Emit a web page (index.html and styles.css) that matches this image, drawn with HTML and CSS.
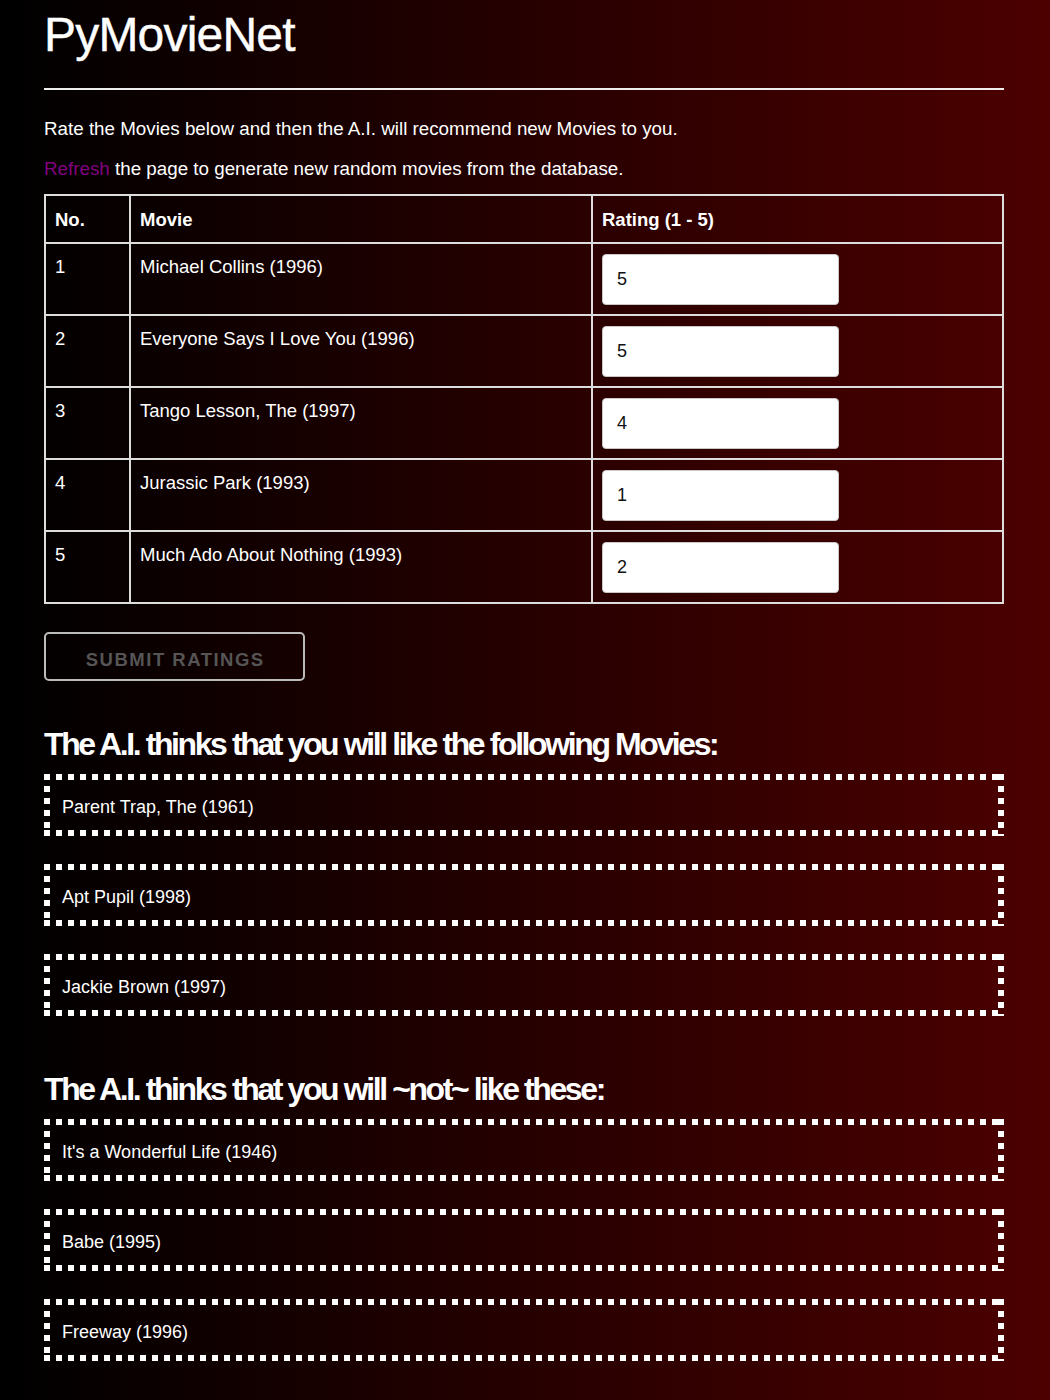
FILE: index.html
```html
<!DOCTYPE html>
<html lang="en">
<head>
<meta charset="utf-8">
<title>PyMovieNet</title>
<link rel="stylesheet" href="styles.css">
</head>
<body>
<div class="container">
  <h1 class="title">PyMovieNet</h1>
  <hr class="rule">
  <p class="intro">Rate the Movies below and then the A.I. will recommend new Movies to you.</p>
  <p class="intro intro-last"><a class="refresh" href="#">Refresh</a> the page to generate new random movies from the database.</p>

  <form class="rate-form">
    <table class="movies">
      <colgroup>
        <col class="col-no">
        <col class="col-movie">
        <col class="col-rating">
      </colgroup>
      <thead>
        <tr><th>No.</th><th>Movie</th><th>Rating (1 - 5)</th></tr>
      </thead>
      <tbody>
        <tr><td>1</td><td>Michael Collins (1996)</td><td><input class="rating" type="text" value="5"></td></tr>
        <tr><td>2</td><td>Everyone Says I Love You (1996)</td><td><input class="rating" type="text" value="5"></td></tr>
        <tr><td>3</td><td>Tango Lesson, The (1997)</td><td><input class="rating" type="text" value="4"></td></tr>
        <tr><td>4</td><td>Jurassic Park (1993)</td><td><input class="rating" type="text" value="1"></td></tr>
        <tr><td>5</td><td>Much Ado About Nothing (1993)</td><td><input class="rating" type="text" value="2"></td></tr>
      </tbody>
    </table>
    <button class="submit" type="button">Submit Ratings</button>
  </form>

  <section class="section">
    <h2 class="section-title">The A.I. thinks that you will like the following Movies:</h2>
    <div class="rec-list">
      <div class="rec-item">Parent Trap, The (1961)</div>
      <div class="rec-item">Apt Pupil (1998)</div>
      <div class="rec-item">Jackie Brown (1997)</div>
    </div>
  </section>

  <section class="section section-second">
    <h2 class="section-title">The A.I. thinks that you will ~not~ like these:</h2>
    <div class="rec-list">
      <div class="rec-item">It's a Wonderful Life (1946)</div>
      <div class="rec-item">Babe (1995)</div>
      <div class="rec-item">Freeway (1996)</div>
    </div>
  </section>
</div>
</body>
</html>
```
FILE: styles.css
```css
html {
  min-height: 100%;
  background: linear-gradient(to right, #000 0%, #4c0000 100%);
}

body {
  margin: 0;
  min-height: 100%;
  color: #fff;
  font-family: "Helvetica Neue", Helvetica, "Liberation Sans", Arial, sans-serif;
  font-size: 18.5px;
  line-height: 26px;
}

.container {
  width: 960px;
  margin: 0 0 0 44px;
  padding-top: 6px;
  padding-bottom: 40px;
}

.title {
  margin: 0;
  font-size: 48px;
  line-height: 58px;
  font-weight: 400;
  letter-spacing: -0.8px;
  -webkit-text-stroke: 0.4px #fff;
}

.rule {
  margin: 24px 0 0;
  border: 0;
  border-top: 2px solid #eee;
  height: 0;
}

.intro {
  margin: 26px 0 0;
  font-size: 18.8px;
}

.intro-last {
  margin-top: 14px;
}

.refresh {
  color: #800080;
  text-decoration: none;
}

.rate-form {
  margin-top: 12px;
}

.movies {
  width: 960px;
  table-layout: fixed;
  border-collapse: separate;
  border-spacing: 0;
  border-left: 2px solid #ddd;
  border-top: 2px solid #ddd;
}

.col-no { width: 85px; }
.col-movie { width: 462px; }
.col-rating { width: 411px; }

.movies th,
.movies td {
  border-right: 2px solid #ddd;
  border-bottom: 2px solid #ddd;
  text-align: left;
  vertical-align: top;
  padding: 10px 9px 9px;
}

.movies th {
  font-weight: 700;
  padding-top: 11px;
}

.rating {
  display: block;
  box-sizing: border-box;
  width: 237px;
  height: 51px;
  margin: 0;
  padding: 0 14px;
  border: 1px solid #c8c8c8;
  border-radius: 4px;
  background: #fff;
  color: #111;
  font-family: inherit;
  font-size: 18px;
  outline: none;
}

.submit {
  display: block;
  box-sizing: border-box;
  width: 261px;
  height: 49px;
  margin-top: 28px;
  padding: 6px 0 0;
  background: transparent;
  border: 2px solid #bbb;
  border-radius: 5px;
  color: #555;
  font-family: inherit;
  font-size: 18.5px;
  font-weight: 700;
  letter-spacing: 1.5px;
  text-transform: uppercase;
  text-indent: 1.5px;
  cursor: pointer;
}

.section {
  margin-top: 43px;
}

.section-second {
  margin-top: 53px;
}

.section-title {
  margin: 0 0 10px;
  font-size: 32px;
  line-height: 40px;
  font-weight: 700;
  letter-spacing: -2.4px;
}

.rec-list {
  display: flex;
  flex-direction: column;
  gap: 28px;
}

.rec-item {
  box-sizing: border-box;
  height: 62px;
  padding: 20px 18px 16px;
  font-size: 18px;
  background:
    repeating-linear-gradient(to right, #fff 0 6px, transparent 6px 12px) left top / 100% 6px no-repeat,
    repeating-linear-gradient(to right, #fff 0 6px, transparent 6px 12px) left bottom / 100% 6px no-repeat,
    repeating-linear-gradient(to bottom, #fff 0 6px, transparent 6px 12px) left top / 6px 100% no-repeat,
    repeating-linear-gradient(to bottom, #fff 0 6px, transparent 6px 12px) right top / 6px 100% no-repeat;
}
```
